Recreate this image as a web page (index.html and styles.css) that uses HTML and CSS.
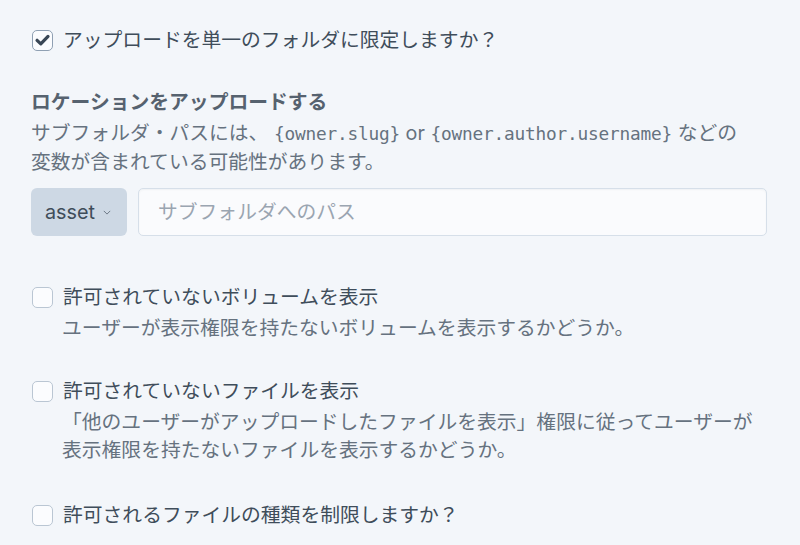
FILE: index.html
```html
<!DOCTYPE html>
<html lang="ja">
<head>
<meta charset="utf-8">
<link rel="stylesheet" href="styles.css">
</head>
<body>
<div class="page">
  <div class="field field-first">
    <label class="check">
      <span class="box checked">
        <svg viewBox="0 0 20 20" width="20" height="20"><path d="M4.3 10.3 L8.2 14.1 L15.8 6.2" fill="none" stroke="#3a4756" stroke-width="3.4" stroke-linecap="round" stroke-linejoin="round"/></svg>
      </span>
      <span class="label">アップロードを単一のフォルダに限定しますか？</span>
    </label>
  </div>

  <div class="field field-location">
    <div class="heading">ロケーションをアップロードする</div>
    <div class="instructions">サブフォルダ・パスには、 <code>{owner.slug}</code> or <code>{owner.author.username}</code> などの<br>変数が含まれている可能性があります。</div>
    <div class="path-row">
      <div class="select-btn">asset <span class="chev"><svg viewBox="0 0 10 6" width="8" height="5"><path d="M1 1 L5 5 L9 1" fill="none" stroke="#6a7684" stroke-width="1.2"/></svg></span></div>
      <div class="text-input">サブフォルダへのパス</div>
    </div>
  </div>

  <div class="field field-vol">
    <label class="check">
      <span class="box"></span>
      <span class="label">許可されていないボリュームを表示</span>
    </label>
    <div class="desc">ユーザーが表示権限を持たないボリュームを表示するかどうか。</div>
  </div>

  <div class="field field-files">
    <label class="check">
      <span class="box"></span>
      <span class="label">許可されていないファイルを表示</span>
    </label>
    <div class="desc">「他のユーザーがアップロードしたファイルを表示」権限に従ってユーザーが<br>表示権限を持たないファイルを表示するかどうか。</div>
  </div>

  <div class="field field-types">
    <label class="check">
      <span class="box"></span>
      <span class="label">許可されるファイルの種類を制限しますか？</span>
    </label>
  </div>
</div>
</body>
</html>
```

FILE: styles.css
```css
html, body {
  margin: 0;
  padding: 0;
  background: #f3f6fa;
}
body {
  font-family: Inter, "Noto Sans CJK JP", sans-serif;
  font-size: 19.8px;
  line-height: 28px;
  color: #3f4d5a;
}
.page {
  padding: 26px 0 0 31px;
  width: 736px;
}
.field {
  display: flex;
  flex-direction: column;
}
.field-first { margin-bottom: 34px; }
.field-location { margin-bottom: 47px; }
.field-vol { margin-bottom: 35px; }
.field-files { margin-bottom: 37px; }

.check {
  display: flex;
  align-items: center;
  gap: 10px;
  height: 28px;
}
.box {
  box-sizing: border-box;
  width: 21px;
  height: 21px;
  margin-left: 1px;
  border: 1.5px solid #bac6d3;
  border-radius: 5px;
  background: #fbfcfe;
  display: flex;
  align-items: center;
  justify-content: center;
  flex: none;
}
.box.checked {
  border-color: #8fa0b3;
}
.box svg { display: block; }
.label {
  white-space: nowrap;
}
.desc {
  margin-top: 3px;
  padding-left: 31px;
  color: #66727f;
}
.heading {
  font-weight: 700;
  color: #56626f;
}
.instructions {
  margin-top: 3px;
  color: #66727f;
  white-space: nowrap;
}
code {
  font-family: "DejaVu Sans Mono", monospace;
  font-size: 17.8px;
  letter-spacing: -0.2px;
}
.path-row {
  display: flex;
  gap: 11px;
  margin-top: 12px;
}
.select-btn {
  box-sizing: border-box;
  height: 48px;
  width: 96px;
  background: #cdd8e4;
  border-radius: 6px;
  display: flex;
  align-items: center;
  padding-left: 14px;
  gap: 8px;
  color: #3f4d5a;
  flex: none;
}
.chev { display: flex; align-items: center; }
.text-input {
  box-sizing: border-box;
  flex: 1;
  height: 48px;
  background: #fafbfd;
  border: 1.5px solid #d6dfe9;
  border-radius: 5px;
  box-shadow: inset 0 1px 2px rgba(60, 80, 110, 0.06);
  padding-left: 19px;
  display: flex;
  align-items: center;
  color: #9aa5b1;
}
```
